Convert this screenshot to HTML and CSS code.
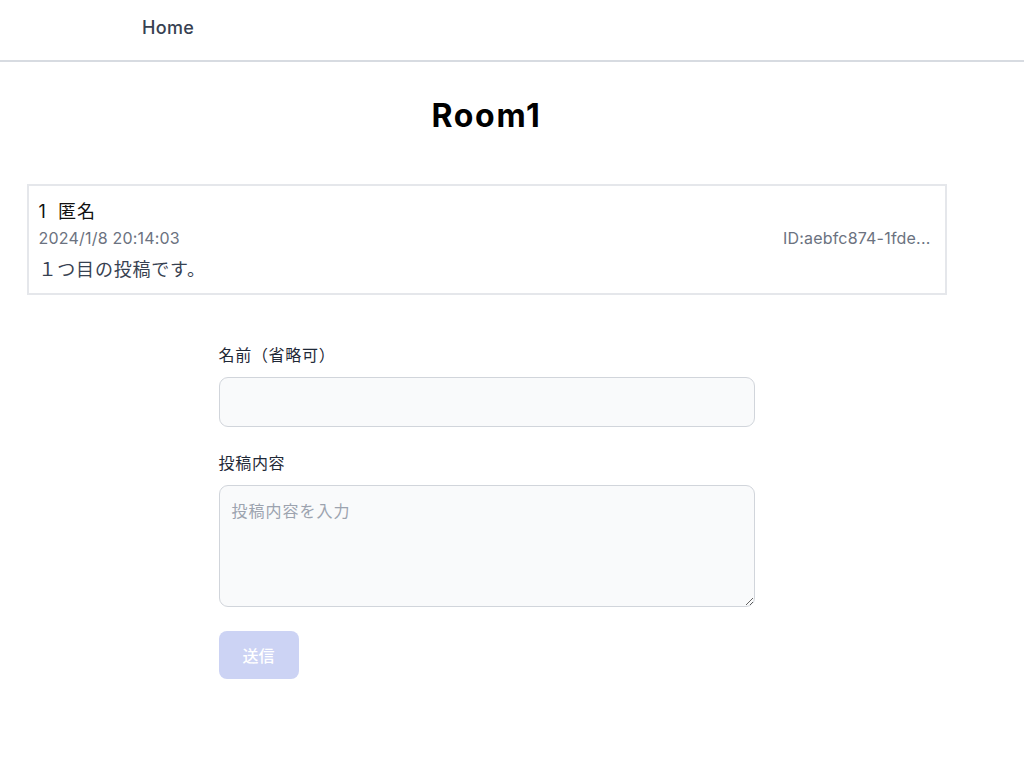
FILE: index.html
```html
<!DOCTYPE html>
<html lang="ja">
<head>
<meta charset="utf-8">
<title>Room1</title>
<link rel="stylesheet" href="styles.css">
</head>
<body>
<header class="nav">
  <a class="nav-link" href="#">Home</a>
</header>
<main class="page">
  <h1 class="title">Room1</h1>
  <section class="post">
    <div class="post-head">1 匿名</div>
    <div class="post-meta">
      <span class="post-date">2024/1/8 20:14:03</span>
      <span class="post-id">ID:aebfc874-1fde...</span>
    </div>
    <p class="post-body">１つ目の投稿です。</p>
  </section>
  <form class="form">
    <label class="label" for="name">名前（省略可）</label>
    <input class="input" id="name" type="text">
    <label class="label" for="content">投稿内容</label>
    <textarea class="textarea" id="content" placeholder="投稿内容を入力"></textarea>
    <button class="submit" type="button" disabled>送信</button>
  </form>
</main>
</body>
</html>
```

FILE: styles.css
```css
* { box-sizing: border-box; }
body {
  margin: 0;
  font-family: Inter, "Noto Sans CJK JP", sans-serif;
  color: #111827;
  background: #fff;
}
.nav {
  height: 62px;
  border-bottom: 2px solid #d7dbe1;
  display: flex;
  align-items: center;
  padding-left: 142px;
  padding-bottom: 6px;
}
.nav-link {
  color: #374151;
  text-decoration: none;
  font-size: 18px;
  font-weight: 500;
  letter-spacing: 0.3px;
}
.page {
  width: 973px;
  display: flex;
  flex-direction: column;
  align-items: center;
}
.title {
  margin: 35px 0 0;
  font-size: 32px;
  font-weight: 700;
  color: #000;
  line-height: 38px;
  letter-spacing: 1.7px;
}
.post {
  margin-top: 49px;
  width: 920px;
  border: 2px solid #e5e7eb;
  padding: 13px 14px 8px 10px;
}
.post-head {
  font-size: 18px;
  line-height: 26px;
  color: #111;
  word-spacing: 5px;
  letter-spacing: 1px;
}
.post-meta {
  display: flex;
  justify-content: space-between;
  gap: 40px;
  font-size: 16px;
  line-height: 26px;
  color: #6b7280;
  letter-spacing: 0.2px;
}
.post-body {
  margin: 4px 0 0;
  font-size: 18px;
  line-height: 30px;
  color: #374151;
  letter-spacing: 0.8px;
}
.form {
  margin-top: 49px;
  width: 536px;
  display: flex;
  flex-direction: column;
  align-items: flex-start;
}
.label {
  font-size: 16px;
  line-height: 22px;
  font-weight: 400;
  color: #1f2937;
  margin-bottom: 11px;
  letter-spacing: 0.7px;
}
.input, .textarea {
  width: 100%;
  border: 1px solid #d1d5db;
  border-radius: 9px;
  background: #f9fafb;
  font-family: inherit;
  font-size: 16px;
  padding: 12px;
  color: #111827;
}
.input { height: 50px; margin-bottom: 25px; }
.textarea {
  height: 122px;
  margin-bottom: 24px;
  resize: vertical;
  font-size: 16px;
  line-height: 26px;
  letter-spacing: 1px;
}
.textarea::placeholder { color: #9ca3af; }
.submit {
  width: 80px;
  height: 48px;
  border: none;
  border-radius: 8px;
  background: #ccd3f4;
  color: #fff;
  font-family: inherit;
  font-size: 16px;
  font-weight: 500;
}
```
